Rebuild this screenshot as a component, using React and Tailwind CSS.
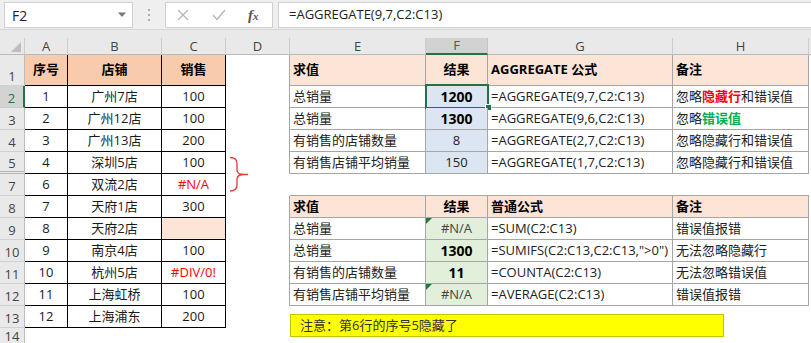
import React from "react";

const FONT = "font-['Open_Sans','Noto_Sans_CJK_SC',sans-serif]";
const GRAY = "border-[#a6a6a6]";

const W = {
  rh: "w-[25px]",
  A: "w-[43px]",
  B: "w-[94px]",
  C: "w-[64px]",
  D: "w-[64px]",
  E: "w-[136px]",
  F: "w-[62px]",
  G: "w-[185px]",
  H: "w-[136px]",
};

function Cell({ w, className = "", children }) {
  return (
    <div className={`${w} shrink-0 h-full flex items-center whitespace-nowrap ${className}`}>
      {children}
    </div>
  );
}

function RowHeader({ n, sel, dbl, short }) {
  if (sel) {
    return (
      <div className="w-[25px] shrink-0 h-full flex justify-center items-end pb-[1px] bg-[#d3d3d3] border-b border-b-[#c8c8c8] border-r-2 border-r-[#217346] text-[#217346] text-[13px] leading-[16px]">
        {n}
      </div>
    );
  }
  if (dbl) {
    return (
      <div className="w-[25px] shrink-0 h-full flex justify-center items-end bg-[#e9e9e9] border-r border-r-[#bdbdbd] border-b-[3px] border-double border-b-[#b5b5b5] text-[#444] text-[13px] leading-[16px]">
        {n}
      </div>
    );
  }
  if (short) {
    return (
      <div className="w-[25px] shrink-0 h-full flex justify-center items-start pt-[2px] bg-[#e9e9e9] border-r border-r-[#bdbdbd] text-[#444] text-[13px] leading-[12px]">
        {n}
      </div>
    );
  }
  return (
    <div className="w-[25px] shrink-0 h-full flex justify-center items-end pb-[1px] bg-[#e9e9e9] border-r border-r-[#bdbdbd] border-b border-b-[#d0d0d0] text-[#444] text-[13px] leading-[16px]">
      {n}
    </div>
  );
}

function Triangle() {
  return (
    <svg className="absolute left-0 top-0" width="6" height="6" viewBox="0 0 6 6">
      <polygon points="0,0 6,0 0,6" fill="#1f7a3a" />
    </svg>
  );
}

function LeftCells({ l }) {
  if (!l) {
    return (
      <>
        <Cell w={W.A} />
        <Cell w={W.B} />
        <Cell w={W.C} />
      </>
    );
  }
  const base = "border-r border-b border-black justify-center text-[13px]";
  const hdr = l.hdr ? "bg-[#f8cbad] font-bold text-black" : "text-[#1a1a1a]";
  return (
    <>
      <Cell w={W.A} className={`${base} ${hdr}`}>{l.a}</Cell>
      <Cell w={W.B} className={`${base} ${hdr}`}>{l.b}</Cell>
      <Cell
        w={W.C}
        className={`${base} ${hdr} ${l.red ? "!text-[#ff0000]" : ""} ${l.bg ? "bg-[#fce4d6]" : ""}`}
      >
        {l.c}
      </Cell>
    </>
  );
}

function RightCells({ r }) {
  const k = r.kind;
  if (k === "none") {
    return (
      <>
        <Cell w={W.D} />
        <Cell w={W.E} />
        <Cell w={W.F} />
        <Cell w={W.G} />
        <Cell w={W.H} />
      </>
    );
  }
  if (k === "top2") {
    return (
      <>
        <Cell w={W.D} />
        <Cell w={W.E} className={`border-b ${GRAY}`} />
        <Cell w={W.F} className={`border-b ${GRAY}`} />
        <Cell w={W.G} className={`border-b ${GRAY}`} />
        <Cell w={W.H} className={`border-b ${GRAY}`} />
      </>
    );
  }
  const isHdr = k === "t1h" || k === "t2h";
  const b = `border-r border-b ${GRAY} text-[13px]`;
  const hdr = isHdr ? "bg-[#fce4d6] font-bold text-black" : "text-[#222]";
  const fBg = isHdr ? "" : k === "t1" ? "bg-[#dce6f2]" : "bg-[#e2efda]";
  return (
    <>
      <Cell w={W.D} className={`border-r ${GRAY}`} />
      <Cell w={W.E} className={`${b} ${hdr} pl-[3px]`}>{r.e}</Cell>
      <Cell
        w={W.F}
        className={`${b} ${hdr} ${fBg} justify-center relative ${r.fb ? "font-bold text-[14px] text-black" : ""} ${r.na ? "!text-[#444]" : ""}`}
      >
        {r.tri && <Triangle />}
        {r.f}
        {r.sel && (
          <>
            <div className="absolute left-[-1px] top-[-2px] w-[64px] h-[25px] border-2 border-[#217346] pointer-events-none" />
            <div className="absolute left-[59px] top-[18px] w-[7px] h-[7px] bg-[#217346] border border-white" />
          </>
        )}
      </Cell>
      <Cell w={W.G} className={`${b} ${hdr} pl-[3px]`}>{r.g}</Cell>
      <Cell w={W.H} className={`${b} ${hdr} pl-[3px]`}>{r.h}</Cell>
    </>
  );
}

const rows = [
  {
    n: "1", hc: "h-[31px]",
    l: { a: "序号", b: "店铺", c: "销售", hdr: true },
    r: { kind: "t1h", e: "求值", f: "结果", g: "AGGREGATE 公式", h: "备注" },
  },
  {
    n: "2", sel: true,
    l: { a: "1", b: "广州7店", c: "100" },
    r: {
      kind: "t1", e: "总销量", f: "1200", fb: true, sel: true, g: "=AGGREGATE(9,7,C2:C13)",
      h: (<>忽略<span className="text-[#ff0000] font-bold">隐藏行</span>和错误值</>),
    },
  },
  {
    n: "3",
    l: { a: "2", b: "广州12店", c: "100" },
    r: {
      kind: "t1", e: "总销量", f: "1300", fb: true, g: "=AGGREGATE(9,6,C2:C13)",
      h: (<>忽略<span className="text-[#00b050] font-bold">错误值</span></>),
    },
  },
  {
    n: "4",
    l: { a: "3", b: "广州13店", c: "200" },
    r: { kind: "t1", e: "有销售的店铺数量", f: "8", g: "=AGGREGATE(2,7,C2:C13)", h: "忽略隐藏行和错误值" },
  },
  {
    n: "5", dbl: true,
    l: { a: "4", b: "深圳5店", c: "100" },
    r: { kind: "t1", e: "有销售店铺平均销量", f: "150", g: "=AGGREGATE(1,7,C2:C13)", h: "忽略隐藏行和错误值" },
  },
  {
    n: "7",
    l: { a: "6", b: "双流2店", c: "#N/A", red: true },
    r: { kind: "top2" },
  },
  {
    n: "8",
    l: { a: "7", b: "天府1店", c: "300" },
    r: { kind: "t2h", e: "求值", f: "结果", g: "普通公式", h: "备注" },
  },
  {
    n: "9",
    l: { a: "8", b: "天府2店", c: "", bg: true },
    r: { kind: "t2", e: "总销量", f: "#N/A", na: true, tri: true, g: "=SUM(C2:C13)", h: "错误值报错" },
  },
  {
    n: "10",
    l: { a: "9", b: "南京4店", c: "100" },
    r: { kind: "t2", e: "总销量", f: "1300", fb: true, g: '=SUMIFS(C2:C13,C2:C13,">0")', h: "无法忽略隐藏行" },
  },
  {
    n: "11",
    l: { a: "10", b: "杭州5店", c: "#DIV/0!", red: true },
    r: { kind: "t2", e: "有销售的店铺数量", f: "11", fb: true, g: "=COUNTA(C2:C13)", h: "无法忽略错误值" },
  },
  {
    n: "12",
    l: { a: "11", b: "上海虹桥", c: "100" },
    r: { kind: "t2", e: "有销售店铺平均销量", f: "#N/A", na: true, tri: true, g: "=AVERAGE(C2:C13)", h: "错误值报错" },
  },
  {
    n: "13",
    l: { a: "12", b: "上海浦东", c: "200" },
    r: { kind: "none" },
  },
  { n: "14", hc: "h-[15px]", short: true, l: null, r: { kind: "none" } },
];

function ColHeader({ w, label, sel }) {
  if (sel) {
    return (
      <div className={`${w} shrink-0 h-full flex items-center justify-center bg-[#d2d2d2] border-r border-r-[#c4c4c4] border-b-2 border-b-[#217346] text-[#217346] text-[13px] leading-none`}>
        {label}
      </div>
    );
  }
  return (
    <div className={`${w} shrink-0 h-full flex items-center justify-center border-r border-r-[#cdcdcd] border-b border-b-[#b9b9b9] text-[#444] text-[13px] leading-none`}>
      {label}
    </div>
  );
}

export default function App() {
  return (
    <div className={`relative w-[811px] h-[343px] overflow-hidden bg-white ${FONT}`}>
      {/* Formula bar */}
      <div className="h-[30px] bg-[#efefef] border-b border-[#d6d6d6] flex items-start pt-[2px]">
        <div className="ml-[4px] w-[129px] h-[26px] bg-white border border-[#d0d0d0] flex items-center justify-between pl-[7px] pr-[5px]">
          <span className="text-[14px] text-[#222]">F2</span>
          <svg width="10" height="6" viewBox="0 0 10 6">
            <polygon points="1,0.5 9,0.5 5,5" fill="#777" />
          </svg>
        </div>
        <div className="w-[32px] h-[26px] flex items-center justify-center">
          <svg width="4" height="14" viewBox="0 0 4 14">
            <circle cx="2" cy="2" r="1" fill="#9a9a9a" />
            <circle cx="2" cy="7" r="1" fill="#9a9a9a" />
            <circle cx="2" cy="12" r="1" fill="#9a9a9a" />
          </svg>
        </div>
        <div className="w-[108px] h-[26px] bg-white border border-[#d0d0d0] flex items-center">
          <svg className="ml-[11px]" width="12" height="12" viewBox="0 0 12 12">
            <path d="M1 1 L11 11 M11 1 L1 11" stroke="#b5b5b5" strokeWidth="1.3" fill="none" />
          </svg>
          <svg className="ml-[23px]" width="14" height="12" viewBox="0 0 14 12">
            <path d="M1 6 L5 10.5 L13 1" stroke="#b5b5b5" strokeWidth="1.4" fill="none" />
          </svg>
          <span className="ml-[22px] font-['Liberation_Serif',serif] italic font-bold text-[15px] text-[#555] leading-none">
            f<span className="text-[11px]">x</span>
          </span>
        </div>
        <div className="ml-[5px] flex-1 h-[26px] bg-white border border-[#d0d0d0] border-r-0 flex items-center pl-[10px] text-[13px] text-[#222]">
          =AGGREGATE(9,7,C2:C13)
        </div>
      </div>

      {/* gap */}
      <div className="h-[8px] bg-[#e9e9e9]" />

      {/* column headers */}
      <div className="h-[17px] flex bg-[#e9e9e9]">
        <div className="w-[25px] shrink-0 h-full border-r border-r-[#cdcdcd] border-b border-b-[#b9b9b9] flex items-end justify-end pr-[3px] pb-[2px]">
          <svg width="10" height="10" viewBox="0 0 10 10">
            <polygon points="10,0 10,10 0,10" fill="#bdbdbd" />
          </svg>
        </div>
        <ColHeader w={W.A} label="A" />
        <ColHeader w={W.B} label="B" />
        <ColHeader w={W.C} label="C" />
        <ColHeader w={W.D} label="D" />
        <ColHeader w={W.E} label="E" />
        <ColHeader w={W.F} label="F" sel />
        <ColHeader w={W.G} label="G" />
        <ColHeader w={W.H} label="H" />
        <div className="flex-1 h-full border-b border-b-[#b9b9b9]" />
      </div>

      {/* rows */}
      {rows.map((row) => (
        <div key={row.n} className={`flex ${row.hc || "h-[22px]"}`}>
          <RowHeader n={row.n} sel={row.sel} dbl={row.dbl} short={row.short} />
          <LeftCells l={row.l} />
          <RightCells r={row.r} />
        </div>
      ))}

      {/* red brace */}
      <svg className="absolute left-[228px] top-[155px]" width="22" height="40" viewBox="0 0 22 40">
        <path
          d="M2 2.5 Q9 2.5 9 8.5 L9 15 Q9 19.5 16 19.5 L20 19.5 M16 19.5 Q9 19.5 9 24 L9 30 Q9 36 2 36"
          stroke="#e53935"
          strokeWidth="1.3"
          fill="none"
        />
      </svg>

      {/* note */}
      <div className="absolute left-[290px] top-[314px] w-[434px] h-[23px] bg-[#ffff00] border border-[#c4c400] flex items-center pl-[9px] text-[13px] text-[#333] whitespace-nowrap">
        注意：第6行的序号5隐藏了
      </div>
    </div>
  );
}
